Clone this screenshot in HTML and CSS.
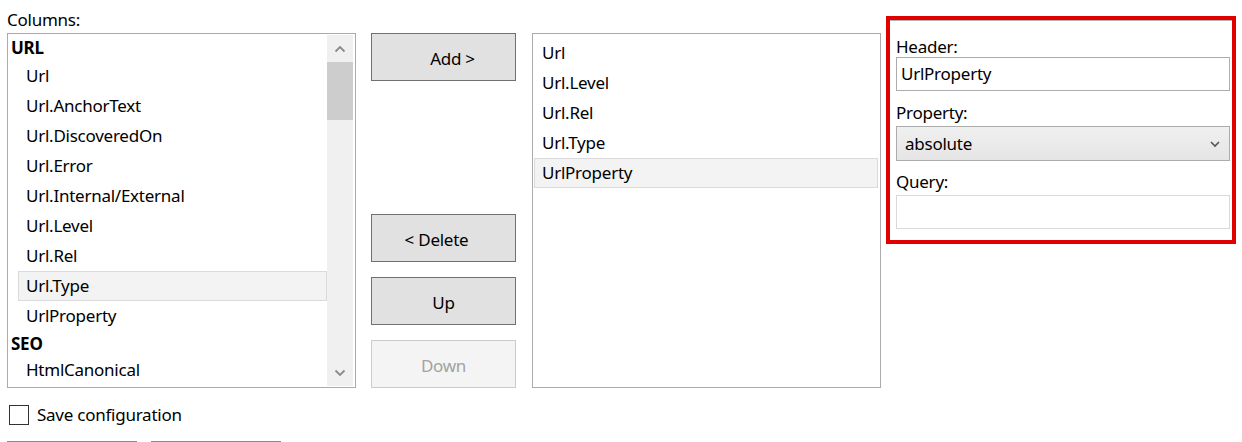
FILE: index.html
```html
<!DOCTYPE html>
<html>
<head>
<meta charset="utf-8">
<link rel="stylesheet" href="styles.css">
</head>
<body>
<div class="page">
  <div class="col-left">
    <div class="caption">Columns:</div>
    <div class="listbox list-left">
      <div class="list-items">
        <div class="group">URL</div>
        <div class="item">Url</div>
        <div class="item">Url.AnchorText</div>
        <div class="item">Url.DiscoveredOn</div>
        <div class="item">Url.Error</div>
        <div class="item">Url.Internal/External</div>
        <div class="item">Url.Level</div>
        <div class="item">Url.Rel</div>
        <div class="item selected">Url.Type</div>
        <div class="item">UrlProperty</div>
        <div class="group group-tight">SEO</div>
        <div class="item">HtmlCanonical</div>
      </div>
      <div class="vscroll">
        <div class="sb-btn">
          <svg width="12" height="8" viewBox="0 0 12 8"><path d="M1.5 6.5 L6 2 L10.5 6.5" fill="none" stroke="#8a8a8a" stroke-width="1.8"/></svg>
        </div>
        <div class="sb-thumb"></div>
        <div class="sb-track"></div>
        <div class="sb-btn">
          <svg width="12" height="8" viewBox="0 0 12 8"><path d="M1.5 1.5 L6 6 L10.5 1.5" fill="none" stroke="#8a8a8a" stroke-width="1.8"/></svg>
        </div>
      </div>
    </div>
    <div class="check-row">
      <span class="checkbox"></span>
      <span class="check-label">Save configuration</span>
    </div>
    <div class="bottom-buttons">
      <div class="btn-bottom"></div>
      <div class="btn-bottom"></div>
    </div>
  </div>

  <div class="col-buttons">
    <div class="btn btn-add">Add &gt;</div>
    <div class="btn btn-delete">&lt; Delete</div>
    <div class="btn">Up</div>
    <div class="btn disabled">Down</div>
  </div>

  <div class="listbox list-mid">
    <div class="mid-items">
      <div class="mitem">Url</div>
      <div class="mitem">Url.Level</div>
      <div class="mitem">Url.Rel</div>
      <div class="mitem">Url.Type</div>
      <div class="mitem selected">UrlProperty</div>
    </div>
  </div>

  <div class="props">
    <div class="field-label first">Header:</div>
    <div class="textbox">UrlProperty</div>
    <div class="field-label gap">Property:</div>
    <div class="select">
      <span>absolute</span>
      <svg width="12" height="8" viewBox="0 0 12 8"><path d="M2 2 L6 6 L10 2" fill="none" stroke="#555" stroke-width="1.6"/></svg>
    </div>
    <div class="field-label gap-q">Query:</div>
    <div class="textbox empty"></div>
  </div>
</div>
</body>
</html>
```

FILE: styles.css
```css
html, body {
  margin: 0;
  padding: 0;
  background: #ffffff;
  overflow: hidden;
}

body {
  font-family: "Noto Sans", "Open Sans", sans-serif;
  font-size: 17px;
  letter-spacing: -0.25px;
  color: #000;
}

.page {
  display: flex;
  align-items: flex-start;
  padding-left: 7px;
  width: 1242px;
  height: 442px;
  box-sizing: border-box;
  overflow: hidden;
}

.col-left {
  width: 349px;
  display: flex;
  flex-direction: column;
}

.caption {
  height: 33px;
  line-height: 26px;
  padding-top: 7px;
  box-sizing: border-box;
}

.listbox {
  border: 1px solid #ababab;
  background: #fff;
  box-sizing: border-box;
  height: 355px;
  width: 349px;
}

.list-left {
  display: flex;
}

.list-items {
  flex: 1;
  overflow: hidden;
  padding-top: 1px;
}

.group {
  height: 26px;
  line-height: 26px;
  font-weight: bold;
  padding-left: 3px;
}

.group.group-tight {
  height: 24px;
}

.item {
  height: 30px;
  line-height: 28px;
  margin-left: 10px;
  padding-left: 7px;
  border: 1px solid transparent;
  box-sizing: border-box;
  white-space: nowrap;
}

.item.selected,
.mitem.selected {
  background: #f3f3f3;
  border-color: #dadada;
}

.vscroll {
  width: 26px;
  margin: 1px 2px 1px 0;
  background: #f0f0f0;
  display: flex;
  flex-direction: column;
}

.sb-btn {
  height: 27px;
  display: flex;
  align-items: center;
  justify-content: center;
}

.sb-thumb {
  height: 58px;
  background: #cdcdcd;
}

.sb-track {
  flex: 1;
}

.check-row {
  display: flex;
  align-items: center;
  margin-top: 17px;
  height: 20px;
  margin-left: 2px;
}

.checkbox {
  width: 20px;
  height: 20px;
  border: 1px solid #333;
  box-sizing: border-box;
  background: #fff;
}

.check-label {
  margin-left: 8px;
  line-height: 20px;
}

.bottom-buttons {
  display: flex;
  gap: 14px;
  margin-top: 16px;
}

.btn-bottom {
  width: 130px;
  height: 40px;
  border: 1px solid #8a8a8a;
  background: #e1e1e1;
  box-sizing: border-box;
}

.col-buttons {
  margin-left: 15px;
  margin-top: 33px;
  width: 145px;
  display: flex;
  flex-direction: column;
}

.btn {
  height: 48px;
  border: 1px solid #707070;
  background: #e1e1e1;
  box-sizing: border-box;
  display: flex;
  align-items: center;
  justify-content: center;
  padding-top: 2px;
}

.btn.btn-add {
  padding-left: 18px;
}

.btn + .btn {
  margin-top: 15px;
}

.btn.btn-delete {
  margin-top: 133px;
  padding-right: 14px;
}

.btn.disabled {
  background: #f4f4f4;
  border-color: #cccccc;
  color: #a2a2a2;
}

.list-mid {
  margin-left: 16px;
  margin-top: 33px;
}

.mid-items {
  padding: 4px 2px 0 1px;
}

.mitem {
  height: 30px;
  line-height: 28px;
  padding-left: 7px;
  border: 1px solid transparent;
  box-sizing: border-box;
}

.props {
  margin-left: 5px;
  margin-top: 16px;
  width: 350px;
  height: 228px;
  border: 4px solid #e00000;
  box-shadow: inset 0 1px 0 #b4b4b4;
  box-sizing: border-box;
  padding: 15px 6px 0 6px;
}

.field-label {
  height: 22px;
  line-height: 22px;
}

.field-label.first {
  line-height: 24px;
}

.field-label.gap {
  margin-top: 11px;
}

.field-label.gap-q {
  margin-top: 10px;
}

.textbox {
  height: 34px;
  width: 334px;
  border: 1px solid #acacac;
  box-sizing: border-box;
  line-height: 32px;
  padding-left: 4px;
  background: #fff;
}

.textbox.empty {
  margin-top: 2px;
  border-color: #d9d9d9;
}

.select {
  margin-top: 2px;
  height: 35px;
  width: 334px;
  border: 1px solid #acacac;
  box-sizing: border-box;
  background: linear-gradient(#f0f0f0, #e5e5e5);
  display: flex;
  align-items: center;
  justify-content: space-between;
  padding: 0 8px 0 8px;
}
```
